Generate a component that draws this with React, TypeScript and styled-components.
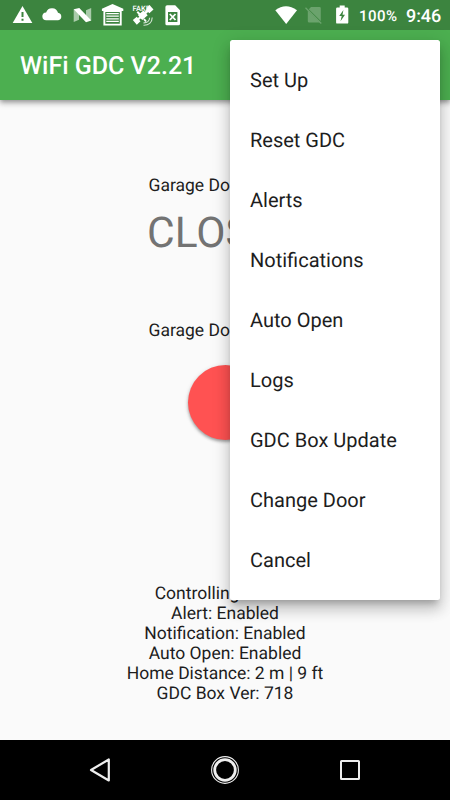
import React from "react";
import styled, { createGlobalStyle } from "styled-components";

const GlobalStyle = createGlobalStyle`
  * { box-sizing: border-box; }
  body {
    margin: 0;
    font-family: Roboto, sans-serif;
    color: #1d1d1d;
    text-rendering: geometricPrecision;
  }
`;

const Screen = styled.div`
  position: relative;
  width: 450px;
  height: 800px;
  display: flex;
  flex-direction: column;
  overflow: hidden;
  background: #fafafa;
`;

const StatusBar = styled.header`
  height: 30px;
  flex: none;
  display: flex;
  justify-content: space-between;
  padding: 0 10px 0 8px;
  background: #3c843f;
  color: #fff;
  z-index: 1;
`;

const IconGroup = styled.div`
  display: flex;
  align-items: center;
`;

const StatusIcon = styled.svg<{ $width?: number }>`
  display: block;
  flex: none;
  width: ${(p) => p.$width ?? 30}px;
  height: 30px;
`;

const FakeLabel = styled.text`
  font: 500 7.5px Roboto, sans-serif;
`;

const BatteryLevel = styled.span`
  width: 47px;
  padding-top: 1px;
  font-size: 15px;
  font-weight: 500;
  letter-spacing: 0.5px;
`;

const Clock = styled.span`
  width: 34px;
  padding-top: 2px;
  font-size: 18px;
  font-weight: 500;
  letter-spacing: -0.1px;
  white-space: nowrap;
`;

const AppBar = styled.div`
  height: 70px;
  flex: none;
  display: flex;
  align-items: center;
  padding: 3px 20px 0;
  background: #4caf50;
  color: #fff;
  box-shadow: 0 2px 5px rgba(0, 0, 0, 0.38), 0 5px 6px rgba(0, 0, 0, 0.08);
`;

const Title = styled.h1`
  margin: 0;
  font-size: 25px;
  font-weight: 500;
`;

const Content = styled.main`
  flex: 1;
  display: flex;
  flex-direction: column;
  align-items: center;
  padding-top: 76px;
  text-align: center;
`;

const Label = styled.div`
  width: 153px;
  font-size: 17.5px;
  line-height: 20px;
  text-align: left;
  white-space: nowrap;
`;

const DoorState = styled.div`
  width: 156px;
  height: 50px;
  margin: 13px 0 62px;
  color: #737373;
  font-size: 42.5px;
  line-height: 50px;
  text-align: left;
  white-space: nowrap;
`;

const DoorButton = styled.button`
  flex: none;
  width: 75px;
  height: 75px;
  margin: 24px 0 144px;
  padding: 0;
  border: 0;
  border-radius: 50%;
  background: #ff5252;
  box-shadow: 0 2px 3px rgba(0, 0, 0, 0.3), 0 1px 5px rgba(0, 0, 0, 0.12);
`;

const Info = styled.div`
  font-size: 17.5px;
  line-height: 20px;
  white-space: nowrap;
`;

const NavBar = styled.nav`
  height: 60px;
  flex: none;
  display: flex;
  justify-content: center;
  gap: 85px;
  align-items: center;
  background: #000;
`;

const NavIcon = styled.svg`
  width: 40px;
  height: 40px;
  fill: none;
  stroke: #eee;
`;

const Menu = styled.ul`
  position: absolute;
  top: 40px;
  right: 10px;
  z-index: 2;
  width: 210px;
  height: 560px;
  margin: 0;
  padding: 10px 0;
  list-style: none;
  border-radius: 2.5px;
  background: #fff;
  box-shadow: 0 6px 6px -3px rgba(0, 0, 0, 0.2),
    0 10px 13px 1px rgba(0, 0, 0, 0.14), 0 4px 18px 2px rgba(0, 0, 0, 0.12);
`;

const MenuItem = styled.li`
  height: 60px;
  padding: 0 20px;
  font-size: 20px;
  line-height: 60px;
`;

const menuItems = [
  "Set Up",
  "Reset GDC",
  "Alerts",
  "Notifications",
  "Auto Open",
  "Logs",
  "GDC Box Update",
  "Change Door",
  "Cancel",
];

const infoLines = [
  "Controlling Door 1",
  "Alert: Enabled",
  "Notification: Enabled",
  "Auto Open: Enabled",
  "Home Distance: 2 m | 9 ft",
  "GDC Box Ver: 718",
];

const NotificationIcons = () => (
  <IconGroup>
    <StatusIcon viewBox="0 0 30 30">
      <path fill="#fff" d="M14.5 6 24.3 23H4.7Z" />
      <path stroke="#3c843f" strokeWidth="2" d="M14.5 12v5M14.5 18.7v2" />
    </StatusIcon>
    <StatusIcon viewBox="0 0 30 30">
      <path
        fill="#fff"
        d="M8.5 20.3a3.9 3.9 0 0 1-.4-7.9A6.2 6.2 0 0 1 20 12.8a3.8 3.8 0 0 1 .2 7.5Z"
      />
    </StatusIcon>
    <StatusIcon viewBox="0 0 30 30">
      <path fill="#a9cbaa" d="M5.7 9.2 11 12v7.8l-5.3 2.3ZM18 10.2l5.2-2.3v12.5L18 18Z" />
      <path fill="#fff" d="M5.7 9.2 11.3 8 23.3 20.4 18 22.2Z" />
    </StatusIcon>
    <StatusIcon viewBox="0 0 30 30">
      <path
        fill="#fff"
        fillRule="evenodd"
        d="m14.5 4 10.8 4.7v2.2h-1.6v14.6H5.4V10.9H3.9V8.7ZM7.3 12v11.7h14.5V12Z"
      />
      <path stroke="#fff" strokeWidth="1.3" d="M8.3 13.6h12.5M8.3 16.2h12.5M8.3 18.8h12.5M8.3 21.4h12.5" />
    </StatusIcon>
    <StatusIcon viewBox="0 0 30 30">
      <FakeLabel x="4.6" y="11.2" fill="#fff">FAKE</FakeLabel>
      <path
        fill="#fff"
        d="M19 7.5 21.5 5l4 4.4-4.2 3.8-1.2-1.1-1.8 1.6 1.4 1.6-5.4 4.8-1.6-1.7-1.5 1.4 1.3 1.4-3.7 3.5-4-4.6 4-3.3 1.1 1.2 1.4-1.3-1.4-1.6 5.6-4.7 1.2 1.3 1.5-1.4Z"
      />
      <path stroke="#fff" strokeWidth="2" d="m9.3 11.7 4 4.2M16 19l2 2.5" />
      <path
        stroke="#d2e4d2"
        strokeWidth="1.1"
        fill="none"
        d="M15.5 25.2c5 .2 8.7-2.7 8.7-7.7M15.5 22.9c3.5.2 6.1-1.8 6.1-5.1"
      />
    </StatusIcon>
    <StatusIcon viewBox="0 0 30 30">
      <path
        fill="#fff"
        fillRule="evenodd"
        d="M9.2 5.3h8l4.8 5v13.4q0 1.5-1.5 1.5H8.8q-1.4 0-1.4-1.5V7.1q0-1.8 1.8-1.8ZM10 12v10h9.4V12Z"
      />
      <path stroke="#fff" strokeWidth="1.8" d="m11.8 14 5.7 6m0-6-5.7 6" />
    </StatusIcon>
  </IconGroup>
);

const SystemIcons = () => (
  <IconGroup>
    <StatusIcon $width={27} viewBox="0 0 27 30">
      <path fill="#fff" d="M13.2 24 2.3 10.3Q12.8 2 24 10.3Z" />
    </StatusIcon>
    <StatusIcon $width={27} viewBox="0 0 27 30">
      <path
        fill="#6ba36d"
        d="M11 7h8.5q1.3 0 1.3 1.3V21L8.8 9.2ZM7.8 10.5 20 22.6H9.2q-1.4 0-1.4-1.4Z"
      />
      <path stroke="#6ba36d" strokeWidth="1.3" d="M5.5 7.8 21.3 23.5" />
    </StatusIcon>
    <StatusIcon $width={32} viewBox="0 0 32 30">
      <path
        fill="#fff"
        d="M12.7 5.6h5v2h2.4q1.2 0 1.2 1.2v13.6q0 1.2-1.2 1.2h-9.8q-1.2 0-1.2-1.2V8.8q0-1.2 1.2-1.2h2.4Z"
      />
      <path fill="#3c843f" d="m16.4 10-4.2 6h2.5l-1.2 5.3 4.5-6.5h-2.5Z" />
    </StatusIcon>
    <BatteryLevel>100%</BatteryLevel>
    <Clock>9:46</Clock>
  </IconGroup>
);

export default function App() {
  return (
    <>
      <GlobalStyle />
      <Screen>
        <StatusBar>
          <NotificationIcons />
          <SystemIcons />
        </StatusBar>
        <AppBar>
          <Title>WiFi GDC V2.21</Title>
        </AppBar>
        <Content>
          <Label>Garage Door Status</Label>
          <DoorState>CLOSED</DoorState>
          <Label>Garage Door Button</Label>
          <DoorButton aria-label="Garage door button" />
          {infoLines.map((line) => (
            <Info key={line}>{line}</Info>
          ))}
        </Content>
        <NavBar>
          <NavIcon viewBox="0 0 40 40">
            <path strokeWidth="2.2" strokeLinejoin="round" d="M11 20 28.8 9.5v21Z" />
          </NavIcon>
          <NavIcon viewBox="0 0 40 40">
            <circle cx="20" cy="20" r="13.4" strokeWidth="1.1" />
            <circle cx="20" cy="20" r="10.3" strokeWidth="2.8" />
          </NavIcon>
          <NavIcon viewBox="0 0 40 40">
            <rect x="11" y="11" width="18" height="18" rx=".5" strokeWidth="2" />
          </NavIcon>
        </NavBar>
        <Menu>
          {menuItems.map((item) => (
            <MenuItem key={item}>{item}</MenuItem>
          ))}
        </Menu>
      </Screen>
    </>
  );
}
